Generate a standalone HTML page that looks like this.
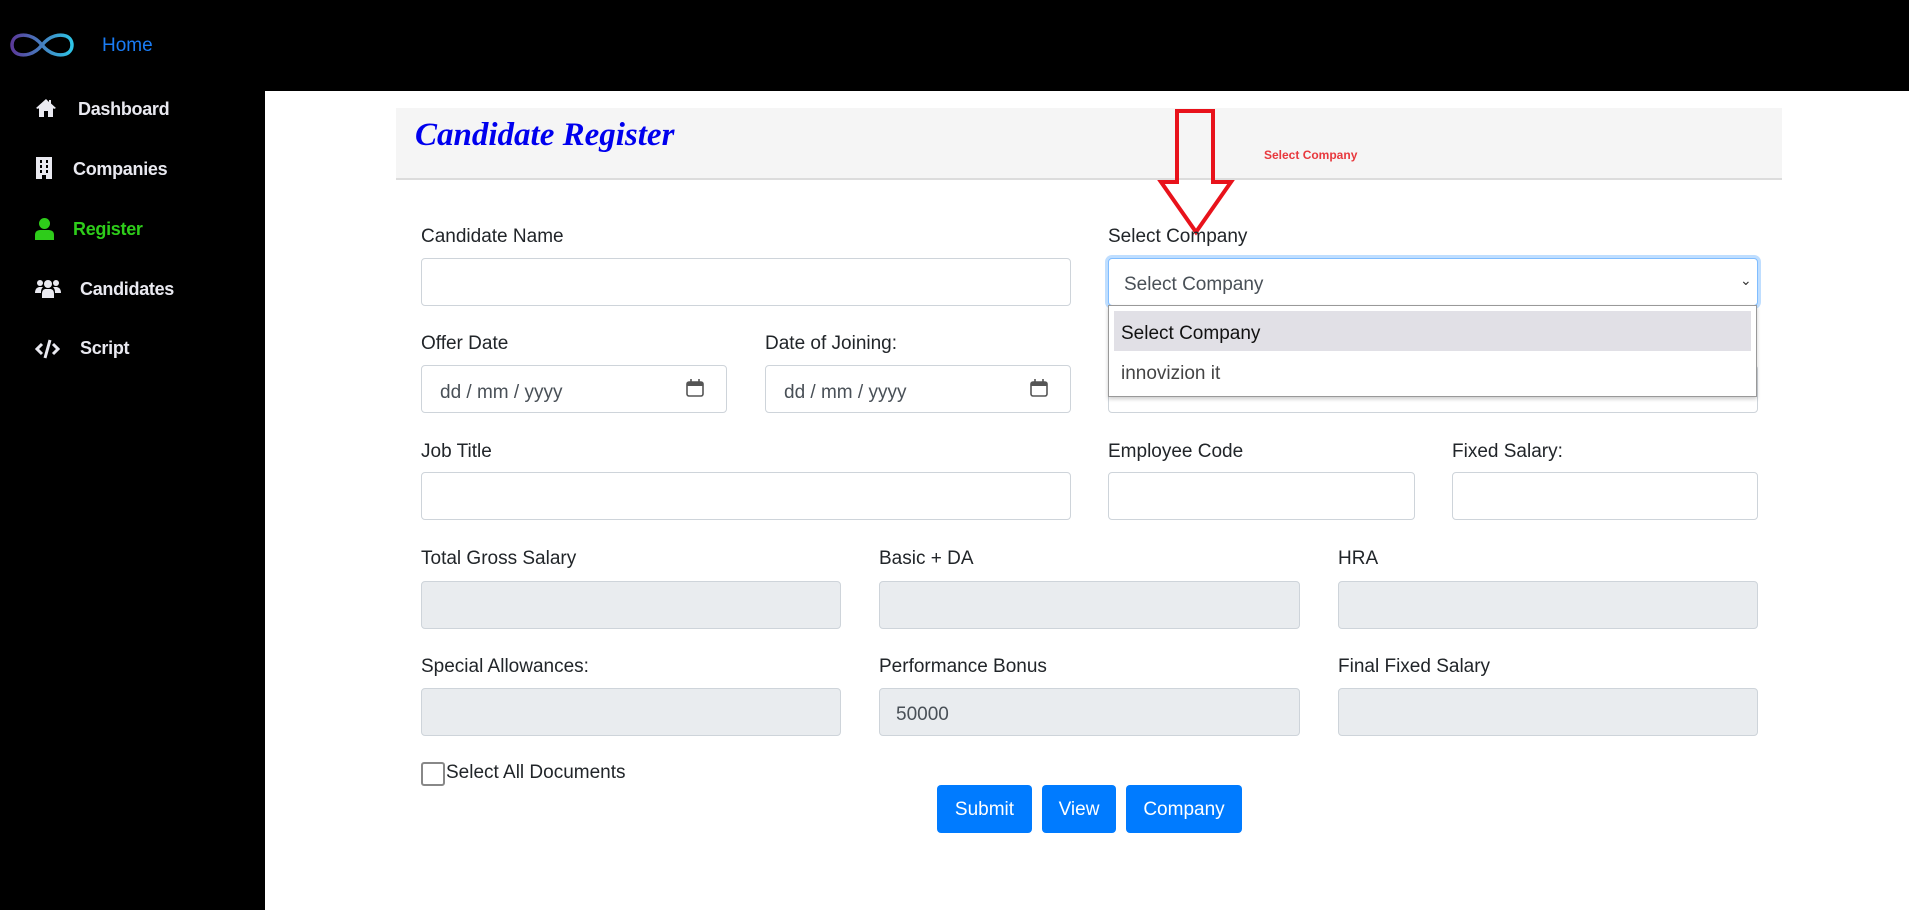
<!DOCTYPE html>
<html><head><meta charset="utf-8"><style>
*{box-sizing:border-box;margin:0;padding:0}
body{width:1909px;height:910px;background:#000;position:relative;overflow:hidden;font-family:"Liberation Sans",sans-serif;color:#212529}
.a{position:absolute}
.nav{position:absolute;color:#e9e9f0;font-weight:bold;font-size:18px;font-family:"Liberation Sans",sans-serif;letter-spacing:-0.3px}
.main{position:absolute;left:265px;top:91px;width:1644px;height:819px;background:#fff}
.lbl{position:absolute;font-size:19px;color:#212529;margin-top:2px}
.inp{position:absolute;border:1px solid #ced4da;border-radius:4px;background:#fff;height:48px}
.dis{background:#e9ecef}
.ph{position:absolute;font-size:19px;color:#495057;margin-top:2px}
.btn{position:absolute;background:#007bff;color:#fff;border-radius:4px;font-size:19px;text-align:center;line-height:50px;height:48px}
</style></head><body>
<svg class="a" style="left:9px;top:32px" width="66" height="26" viewBox="0 0 66 26"><defs><linearGradient id="g" x1="0" x2="1"><stop offset="0" stop-color="#5b3a9a"/><stop offset="1" stop-color="#2ec4e6"/></linearGradient></defs><path d="M33 13 C25 3 15 2 9 4 C1 7 1 19 9 22 C15 24 25 23 33 13 C41 3 51 2 57 4 C65 7 65 19 57 22 C51 24 41 23 33 13Z" fill="none" stroke="url(#g)" stroke-width="3.5"/></svg>
<div class="a" style="left:102px;top:35px;font-size:19px;color:#1a7cf5">Home</div>

<svg class="a" style="left:35px;top:98px" width="22" height="20" viewBox="0 0 22 20"><path d="M11 1 L1 10 L3 11 L4 10 V19 H9 V13 H13 V19 H18 V10 L19 11 L21 10 L16 5.5 V2 H14 V4 Z" fill="#e9e9f0"/></svg>
<div class="nav" style="left:78px;top:99px">Dashboard</div>
<svg class="a" style="left:35px;top:157px" width="18" height="22" viewBox="0 0 18 22"><path d="M1 0H17V22H11V18H7V22H1Z" fill="#e9e9f0"/><g fill="#000"><rect x="5" y="3" width="2" height="3"/><rect x="11" y="3" width="2" height="3"/><rect x="5" y="8" width="2" height="3"/><rect x="11" y="8" width="2" height="3"/><rect x="5" y="13" width="2" height="3"/><rect x="11" y="13" width="2" height="3"/></g></svg>
<div class="nav" style="left:73px;top:159px">Companies</div>
<svg class="a" style="left:35px;top:218px" width="19" height="22" viewBox="0 0 19 22"><circle cx="9.5" cy="5.5" r="5.5" fill="#2ecc1a"/><path d="M0 22 V17 C0 13 3 12 6 12 H13 C16 12 19 13 19 17 V22Z" fill="#2ecc1a"/></svg>
<div class="nav" style="left:73px;top:219px;color:#2ecc1a">Register</div>
<svg class="a" style="left:35px;top:279px" width="26" height="19" viewBox="0 0 26 19"><g fill="#e9e9f0"><circle cx="5" cy="4" r="3"/><circle cx="21" cy="4" r="3"/><circle cx="13" cy="5" r="4"/><path d="M0 14 C0 9 3 8 5 8 H8 C6 10 6 12 6 14Z M26 14 C26 9 23 8 21 8 H18 C20 10 20 12 20 14Z M7 19 V15 C7 11 9 10 11 10 H15 C17 10 19 11 19 15 V19Z"/></g></svg>
<div class="nav" style="left:80px;top:279px">Candidates</div>
<svg class="a" style="left:35px;top:339px" width="25" height="20" viewBox="0 0 25 20"><g fill="none" stroke="#e9e9f0" stroke-width="3"><path d="M7 5 L2 10 L7 15 M18 5 L23 10 L18 15 M15 1 L10 19"/></g></svg>
<div class="nav" style="left:80px;top:338px">Script</div>

<div class="main"></div>
<div class="a" style="left:396px;top:108px;width:1386px;height:72px;background:#f5f5f5;border-bottom:2px solid #dcdcdc"></div>
<div class="a" style="left:415px;top:117px;font-family:'Liberation Serif',serif;font-style:italic;font-weight:bold;font-size:33px;color:#0000ee">Candidate Register</div>
<div class="a" style="left:1264px;top:148px;font-size:12px;font-weight:bold;color:#e8383d">Select Company</div>
<svg class="a" style="left:1155px;top:108px" width="82" height="128" viewBox="0 0 82 128"><path d="M22 3 H58 V74 H76 L41 124 L6 74 H22 Z" fill="none" stroke="#e8121b" stroke-width="4"/></svg>

<div class="lbl" style="left:421px;top:224px">Candidate Name</div>
<div class="inp" style="left:421px;top:258px;width:650px"></div>
<div class="lbl" style="left:1108px;top:224px">Select Company</div>
<div class="inp" style="left:1108px;top:258px;width:650px;border-color:#80bdff;box-shadow:0 0 0 3px rgba(0,123,255,.25)"></div>
<div class="ph" style="left:1124px;top:272px">Select Company</div>
<div class="a" style="left:1740px;top:272px;font-size:14px;color:#333">&#8964;</div>

<div class="lbl" style="left:421px;top:331px">Offer Date</div>
<div class="inp" style="left:421px;top:365px;width:306px"></div>
<div class="ph" style="left:440px;top:380px">dd / mm / yyyy</div>
<div class="lbl" style="left:765px;top:331px">Date of Joining:</div>
<div class="inp" style="left:765px;top:365px;width:306px"></div>
<div class="ph" style="left:784px;top:380px">dd / mm / yyyy</div>
<svg class="a" style="left:685px;top:378px" width="20" height="20" viewBox="0 0 20 20"><rect x="2" y="4" width="16" height="14" rx="2" fill="none" stroke="#555" stroke-width="1.6"/><rect x="2" y="4" width="16" height="4" fill="#555"/><path d="M6 1V5M14 1V5" stroke="#555" stroke-width="1.6"/></svg>
<svg class="a" style="left:1029px;top:378px" width="20" height="20" viewBox="0 0 20 20"><rect x="2" y="4" width="16" height="14" rx="2" fill="none" stroke="#555" stroke-width="1.6"/><rect x="2" y="4" width="16" height="4" fill="#555"/><path d="M6 1V5M14 1V5" stroke="#555" stroke-width="1.6"/></svg>
<div class="inp" style="left:1108px;top:365px;width:650px"></div>
<div class="a" style="left:1108px;top:305px;width:649px;height:92px;background:#fff;border:1px solid #999;box-shadow:0 2px 4px rgba(0,0,0,.2)"></div>
<div class="a" style="left:1114px;top:311px;width:637px;height:40px;background:#e1e0e6"></div>
<div class="a" style="left:1121px;top:323px;font-size:19px;color:#111">Select Company</div>
<div class="a" style="left:1121px;top:363px;font-size:19px;color:#444">innovizion it</div>

<div class="lbl" style="left:421px;top:439px">Job Title</div>
<div class="inp" style="left:421px;top:472px;width:650px"></div>
<div class="lbl" style="left:1108px;top:439px">Employee Code</div>
<div class="inp" style="left:1108px;top:472px;width:307px"></div>
<div class="lbl" style="left:1452px;top:439px">Fixed Salary:</div>
<div class="inp" style="left:1452px;top:472px;width:306px"></div>

<div class="lbl" style="left:421px;top:546px">Total Gross Salary</div>
<div class="inp dis" style="left:421px;top:581px;width:420px"></div>
<div class="lbl" style="left:879px;top:546px">Basic + DA</div>
<div class="inp dis" style="left:879px;top:581px;width:421px"></div>
<div class="lbl" style="left:1338px;top:546px">HRA</div>
<div class="inp dis" style="left:1338px;top:581px;width:420px"></div>

<div class="lbl" style="left:421px;top:654px">Special Allowances:</div>
<div class="inp dis" style="left:421px;top:688px;width:420px"></div>
<div class="lbl" style="left:879px;top:654px">Performance Bonus</div>
<div class="inp dis" style="left:879px;top:688px;width:421px"></div>
<div class="ph" style="left:896px;top:702px">50000</div>
<div class="lbl" style="left:1338px;top:654px">Final Fixed Salary</div>
<div class="inp dis" style="left:1338px;top:688px;width:420px"></div>

<div class="a" style="left:421px;top:762px;width:24px;height:24px;border:2px solid #888;border-radius:3px;background:#fff"></div>
<div class="lbl" style="left:446px;top:760px">Select All Documents</div>

<div class="btn" style="left:937px;top:785px;width:95px">Submit</div>
<div class="btn" style="left:1042px;top:785px;width:74px">View</div>
<div class="btn" style="left:1126px;top:785px;width:116px">Company</div>
</body></html>
